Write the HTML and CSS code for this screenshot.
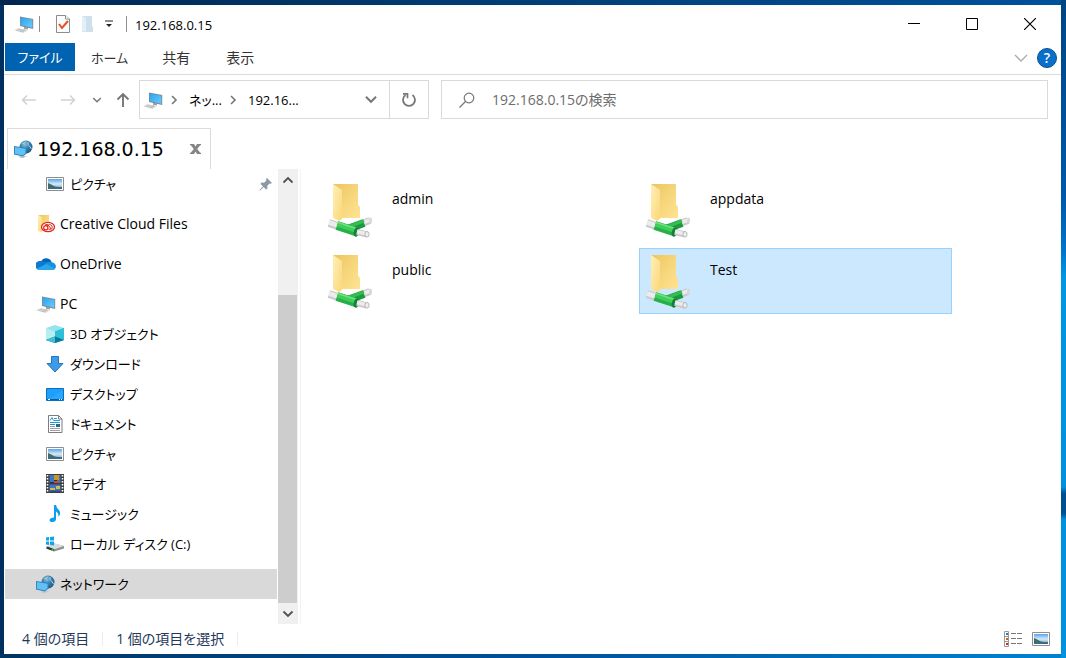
FILE: index.html
```html
<!DOCTYPE html>
<html lang="ja">
<head>
  <meta charset="UTF-8">
  <meta name="viewport" content="width=device-width, initial-scale=1.0">
  <title>192.168.0.15</title>
  <link rel="stylesheet" href="styles.css">
</head>
<body>
  <!-- Iconos compartidos -->
  <svg class="sprite" width="0" height="0" aria-hidden="true">
    <defs>
      <linearGradient id="screen" x1="0" y1="0" x2="1" y2="1">
        <stop offset="0" stop-color="#27a4f2"/><stop offset="1" stop-color="#6ccbfb"/>
      </linearGradient>
      <linearGradient id="back" x1="0" y1="0" x2="1" y2="1">
        <stop offset="0" stop-color="#ecc45f"/><stop offset="0.5" stop-color="#f6d67b"/><stop offset="1" stop-color="#ffe393"/>
      </linearGradient>
      <linearGradient id="flap" x1="0" y1="0" x2="1" y2="1">
        <stop offset="0" stop-color="#fff0b8"/><stop offset="1" stop-color="#fbd778"/>
      </linearGradient>
      <linearGradient id="sky" x1="0" y1="0" x2="0" y2="1">
        <stop offset="0" stop-color="#5ba3e8"/><stop offset="0.5" stop-color="#d3ebfa"/><stop offset="1" stop-color="#6c9db5"/>
      </linearGradient>
      <radialGradient id="globe" cx="0.4" cy="0.3" r="0.8">
        <stop offset="0" stop-color="#8fc3dc"/><stop offset="0.4" stop-color="#3b86b3"/><stop offset="1" stop-color="#174b78"/>
      </radialGradient>
    </defs>
    <symbol id="i-pc" viewBox="0 0 20 20">
      <path d="M0 16.2 4.5 14l9.5 2-4.5 3z" fill="#dedede"/>
      <path d="M2 16.2l8 1.7M4 15.2l8 1.6M6 18l5-2.8" stroke="#b5b9bc" stroke-width=".7"/>
      <path d="M10 12.5l4 1v2l-4-.8z" fill="#9aa2a9"/>
      <path d="M6 2.5 19.2 5v10L6 12z" fill="#7c8b96"/>
      <path d="M6.8 3.5 18.3 5.7v8L6.8 11z" fill="url(#screen)"/>
    </symbol>
    <symbol id="i-net" viewBox="0 0 20 20">
      <circle cx="12" cy="8" r="6.500" fill="url(#globe)"/>
      <path d="M8.500 4.500q2.500 0 3.500-2M14 3q-1 3 1.500 4l2 3" stroke="#b9dfec" stroke-width=".9" fill="none"/>
      <path d="M4 18l4-1.500 5 .7-4.500 2z" fill="#bfc9ce"/>
      <path d="M0 7 12.500 9v5.500L9 17.500 0 15.500z" fill="#2f80bc"/>
      <path d="M.9 8 11.500 9.700V14L9 16.500.9 14.700z" fill="#61c0f5"/>
    </symbol>
    <symbol id="i-picture" viewBox="0 0 20 20">
      <path d="M.5 3.5h17v13H.5z" fill="#fff" stroke="#8e8e8e"/>
      <path d="M2 5h14v10H2z" fill="url(#sky)"/>
      <path d="M2 9q3 1 5 2.5t9 1.5v1H2z" fill="#426c60"/>
      <path d="M2 13.5h14V15H2z" fill="#376b94"/>
    </symbol>
    <symbol id="i-cloudfiles" viewBox="0 0 20 20">
      <path d="M2 1h11v16H4z" fill="url(#back)"/>
      <path d="M2 1l4 2v15l-4-1z" fill="url(#flap)"/>
      <ellipse cx="12" cy="13" rx="6.5" ry="4.7" fill="#fff" stroke="#e0251b" stroke-width="1.3"/>
      <circle cx="9.8" cy="13.7" r="2.1" fill="none" stroke="#e0251b" stroke-width="1.2"/>
      <path d="M9 11q2-2 4 1l2 3M11 12.500q2.500-4 5-.3 1 4-3.500 3" fill="none" stroke="#e0251b" stroke-width="1"/>
    </symbol>
    <symbol id="i-onedrive" viewBox="0 0 20 20">
      <path d="M5.2 7.2a5.7 5.7 0 0 1 10.5 1L9 12z" fill="#0364b8"/>
      <path d="M3.4 16a4.3 4.3 0 0 1 .8-9q2.7-.5 4.5 1l6 4-6 4z" fill="#0f78d4"/>
      <path d="M8.5 10.2q2-3 6.2-2.3 4.7.5 5.2 4.1.2 3.6-3.5 4H9z" fill="#1490df"/>
      <path d="M1 14.5l9.5-4.6 8.6 4.9q-.9 1.2-2.7 1.2H3.4Q2 16 1 14.5z" fill="#28a8ea"/>
    </symbol>
    <symbol id="i-cube" viewBox="0 0 20 20">
      <path d="M0 4 9 1l9 3-9 3.5z" fill="#92e4ed"/>
      <path d="M0 4l9 3.5V19l-9-3z" fill="#5fd2de"/>
      <path d="M18 4 9 7.5V19l9-3z" fill="#17a2bc"/>
      <path d="M0 4l9 3.5v5L0 16z" fill="#b6eef2"/>
      <path d="M9 7.500 18 4v12l-9-3.500z" fill="#2fc0d6"/>
      <path d="M0 16l9-3.5 9 3.5-9 3z" fill="#087c96"/>
      <path d="M0 16l9-3.5V19z" fill="#42bfd0"/>
    </symbol>
    <symbol id="i-download" viewBox="0 0 20 20">
      <path d="M5.5 2.5h7v7H17l-8 8.5-8-8.5h4.5z" fill="#3f9bea" stroke="#2377bd"/>
    </symbol>
    <symbol id="i-desktop" viewBox="0 0 20 20">
      <path d="M.5 4.5h17v12H.5z" fill="#1ca0fb" stroke="#0871bd"/>
      <path d="M5 14 17 6v9H3z" fill="#38adff" opacity=".5"/>
      <path d="M1 15h16v1H1z" fill="#075c9d"/>
      <path d="M2 15.5h2m9 0h1m1 0h1" stroke="#fff"/>
    </symbol>
    <symbol id="i-document" viewBox="0 0 20 20">
      <path d="M2.5 1.5h10L16 5v13.500H2.500z" fill="#fff" stroke="#7d7d7d"/>
      <path d="M12.500 1.500V5H16" fill="none" stroke="#7d7d7d"/>
      <path d="M4 6.500l2-3 1.500 3M8 4.500h3M8 6.500h6M4 8.500h10M4 10.500h5" stroke="#2196d8" fill="none"/>
      <path d="M10 10h4v3h-4z" fill="#276989"/>
      <path d="M4 12.500h5M4 14.500h10M4 16.500h10" stroke="#a0a0a0"/>
    </symbol>
    <symbol id="i-video" viewBox="0 0 20 20">
      <path d="M0 0h18v19H0z" fill="#3e3e3e"/>
      <path d="M1.500 1v18M16.500 1v18" stroke="#fff" stroke-width="1.600" stroke-dasharray="1.600 1.400"/>
      <path d="M3.500 1h11v8h-11zM3.500 10.500h11v7.500h-11z" fill="#3e75c7"/>
      <path d="M8 1h5v5H8z" fill="#c59a20"/>
      <path d="M4 8h4V6h3v3H4z" fill="#26342d"/>
      <path d="M8 7h5v2H8z" fill="#d2482b"/>
      <path d="M4 14h5v2H4zM10 12h4v3h-4z" fill="#dbb94a"/>
      <path d="M4 16.500h10V18H4z" fill="#284f8f"/>
    </symbol>
    <symbol id="i-music" viewBox="0 0 20 20">
      <path d="M8 1h2q.5 3 3 5 2.500 3-.5 7 .5-4-2.500-5.500V15q0 2.500-3.500 3-3 0-3-2 .5-2.500 4.500-2.500z" fill="#0d9df0"/>
    </symbol>
    <symbol id="i-drive" viewBox="0 0 20 20">
      <path d="M0 13l8-3.500L18 12v2.500L8 17.500 0 14.500z" fill="#8c8e90"/>
      <path d="M0 12.500l8-3.500 10 3-10 3.500z" fill="#dadada"/>
      <path d="M1 13.500l7 2.700" stroke="#2f3434" stroke-width="2"/>
      <path d="M5.500 15.700l2 .8" stroke="#35dc63" stroke-width="1.500"/>
      <path d="M0 3.500 3 3v3.500H0zM4 3l4-.5v4H4zM0 7.500h3V11l-3-.5zM4 7.500h4v4L4 11z" fill="#0fa5ee"/>
    </symbol>
    <symbol id="i-share" viewBox="0 0 46 56">
      <path d="M6 1h25v20.500l2 2.500v11H13z" fill="url(#back)"/>
      <path d="M6 1l9 6v29l-3 2-6-3z" fill="url(#flap)"/>
      <!-- tubos blancos -->
      <path d="M2 40l9 3" stroke="#c9c9c9" stroke-width="8"/>
      <path d="M2 39.500l9 3" stroke="#ececec" stroke-width="5"/>
      <path d="M35 40.500l8-3" stroke="#c9c9c9" stroke-width="7"/>
      <path d="M35 40l8-3" stroke="#ececec" stroke-width="4"/>
      <ellipse cx="43.500" cy="37.500" rx="1.500" ry="3" fill="#d8d8d8"/>
      <!-- conector verde -->
      <path d="M22 45.500l15-5.500" stroke="#1b9a3d" stroke-width="8"/>
      <path d="M22 43.500l15-5.500" stroke="#35bd52" stroke-width="3"/>
      <path d="M10 42.500l20 6.500" stroke="#27b048" stroke-width="9"/>
      <path d="M10.500 41l20 6.500" stroke="#3fce5a" stroke-width="5"/>
      <path d="M11 39.500l19 6.200" stroke="#6fe081" stroke-width="1.500"/>
      <ellipse cx="29.500" cy="49" rx="2.600" ry="4.700" fill="#148039" transform="rotate(15 29.500 49)"/>
      <path d="M30 49l10 2.500" stroke="#c9c9c9" stroke-width="6"/>
      <path d="M30 48.500l10 2.500" stroke="#ececec" stroke-width="3.500"/>
      <ellipse cx="40" cy="51.300" rx="2.100" ry="2.800" fill="#eee" stroke="#aaa" stroke-width=".8"/>
    </symbol>
    <symbol id="i-down" viewBox="0 0 12 8">
      <path d="M1.500 1.500 6 6l4.500-4.500" fill="none" stroke="currentColor" stroke-width="1.800"/>
    </symbol>
    <symbol id="i-right" viewBox="0 0 8 12">
      <path d="M2 2l4 4-4 4" fill="none" stroke="currentColor" stroke-width="1.600"/>
    </symbol>
  </svg>

  <div class="window">
    <header class="titlebar">
      <svg class="icon"><use href="#i-pc"/></svg>
      <span class="divider"></span>
      <button class="quick" aria-label="プロパティ">
        <svg width="16" height="18" viewBox="0 0 16 18"><path d="M1.500.5h9l4 3.500v13.500h-13z" fill="#f9fbfd" stroke="#8c8c8c"/><path d="M10.500.5V4h4" fill="#fff" stroke="#8c8c8c"/><path d="M4 9l3 4 6-7" fill="none" stroke="#e8501e" stroke-width="2"/></svg>
      </button>
      <button class="quick" aria-label="新しいフォルダー">
        <svg width="14" height="18" viewBox="0 0 14 18"><path d="M1 1h10v10l1 1v5H1z" fill="#cde0ec"/><path d="M1 1l4 2v14l-4-1z" fill="#e3eff6"/></svg>
      </button>
      <button class="quick small" aria-label="カスタマイズ">
        <svg width="10" height="8" viewBox="0 0 10 8"><path d="M1 1h8" stroke="#222"/><path d="M2 4h6L5 7z" fill="#222"/></svg>
      </button>
      <span class="divider"></span>
      <h1>192.168.0.15</h1>
      <div class="controls">
        <button aria-label="最小化"><svg width="12" height="12" viewBox="0 0 12 12"><path d="M0 5.500h12" stroke="#000"/></svg></button>
        <button aria-label="最大化"><svg width="12" height="12" viewBox="0 0 12 12"><path d="M.5.5h11v11H.5z" fill="none" stroke="#000"/></svg></button>
        <button aria-label="閉じる"><svg width="12" height="12" viewBox="0 0 12 12"><path d="M0 0l12 12M12 0 0 12" stroke="#000" stroke-width="1.200"/></svg></button>
      </div>
    </header>

    <nav class="ribbon">
      <button class="file">ファイル</button>
      <button class="kana">ホーム</button>
      <button>共有</button>
      <button>表示</button>
      <div class="ribbon-end">
        <button class="expand" aria-label="リボンの展開"><svg width="14" height="8" viewBox="0 0 14 8"><path d="M1 1l6 6 6-6" fill="none" stroke="#aaa" stroke-width="1.300"/></svg></button>
        <button class="help" aria-label="ヘルプ">?</button>
      </div>
    </nav>

    <div class="toolbar">
      <button class="nav" aria-label="戻る"><svg width="16" height="12" viewBox="0 0 16 12"><path d="M15 6H1.500M6 1.500 1.500 6 6 10.500" fill="none" stroke="#d2d2d2" stroke-width="1.500"/></svg></button>
      <button class="nav" aria-label="進む"><svg width="16" height="12" viewBox="0 0 16 12"><path d="M1 6h13.500M10 1.500 14.500 6 10 10.500" fill="none" stroke="#d2d2d2" stroke-width="1.500"/></svg></button>
      <button class="nav recent" aria-label="最近表示した場所"><svg width="10" height="8"><use href="#i-down"/></svg></button>
      <button class="nav up" aria-label="上へ"><svg width="14" height="16" viewBox="0 0 14 16"><path d="M7 15V2M1.500 7.500 7 2l5.500 5.500" fill="none" stroke="#767676" stroke-width="1.900"/></svg></button>
      <div class="address">
        <svg class="icon"><use href="#i-pc"/></svg>
        <svg class="sep" width="8" height="12"><use href="#i-right"/></svg>
        <a href="#">ネッ...</a>
        <svg class="sep" width="8" height="12"><use href="#i-right"/></svg>
        <a href="#">192.16...</a>
        <button class="history" aria-label="履歴"><svg width="14" height="9"><use href="#i-down"/></svg></button>
        <button class="refresh" aria-label="更新"><svg width="16" height="16" viewBox="0 0 16 16"><path d="M4.500 3A6 6 0 1 0 11.500 3" fill="none" stroke="#777" stroke-width="1.800"/><path d="M2 1.800h4.500v4.500" fill="none" stroke="#777" stroke-width="1.700"/></svg></button>
      </div>
      <label class="search">
        <svg width="18" height="18" viewBox="0 0 18 18"><circle cx="11" cy="7" r="4.800" fill="none" stroke="#777" stroke-width="1.200"/><path d="M7.500 10.500 1.500 16.500" stroke="#777" stroke-width="1.300"/></svg>
        <input type="search" aria-label="検索" placeholder="192.168.0.15の検索">
      </label>
    </div>

    <div class="tabs">
      <div class="tab">
        <svg class="icon"><use href="#i-net"/></svg>
        <a href="#">192.168.0.15</a>
        <button aria-label="タブを閉じる"><svg width="11" height="10" viewBox="0 0 11 10"><path d="M0 0h4l1.500 2.500L7 0h4v1.200h-.8L7.200 5l3 3.800h.8V10H7L5.500 7.500 4 10H0V8.800h.8l3-3.800-3-3.800H0z" fill="#858585"/></svg></button>
      </div>
    </div>

    <div class="main">
      <nav class="tree">
        <a class="child kana" href="#"><svg class="icon"><use href="#i-picture"/></svg>ピクチャ
          <svg class="pin" width="14" height="14" viewBox="0 0 14 14"><path d="M8 1l5 5-1.500.8-1-.2-2.300 2.300.3 2.600L7 12.500 4.700 10 1 13.500H.5V13L4 9.300 1.500 7l1-1.500 2.600.3L7.400 3.500 7 2z" fill="#8c98a3"/></svg>
        </a>
        <a class="group" href="#"><svg class="icon"><use href="#i-cloudfiles"/></svg>Creative Cloud Files</a>
        <a class="group" href="#"><svg class="icon"><use href="#i-onedrive"/></svg>OneDrive</a>
        <a class="group" href="#"><svg class="icon"><use href="#i-pc"/></svg>PC</a>
        <a class="child kana" href="#"><svg class="icon"><use href="#i-cube"/></svg>3D オブジェクト</a>
        <a class="child kana" href="#"><svg class="icon"><use href="#i-download"/></svg>ダウンロード</a>
        <a class="child kana" href="#"><svg class="icon"><use href="#i-desktop"/></svg>デスクトップ</a>
        <a class="child kana" href="#"><svg class="icon"><use href="#i-document"/></svg>ドキュメント</a>
        <a class="child kana" href="#"><svg class="icon"><use href="#i-picture"/></svg>ピクチャ</a>
        <a class="child kana" href="#"><svg class="icon"><use href="#i-video"/></svg>ビデオ</a>
        <a class="child kana" href="#"><svg class="icon"><use href="#i-music"/></svg>ミュージック</a>
        <a class="child kana" href="#"><svg class="icon"><use href="#i-drive"/></svg>ローカル ディスク (C:)</a>
        <a class="group kana current" href="#"><svg class="icon"><use href="#i-net"/></svg>ネットワーク</a>
      </nav>
      <div class="scrollbar">
        <button aria-label="上へスクロール"><svg class="flip" width="12" height="8"><use href="#i-down"/></svg></button>
        <div class="track"><div class="thumb"></div></div>
        <button aria-label="下へスクロール"><svg width="12" height="8"><use href="#i-down"/></svg></button>
      </div>
      <main class="files">
        <a class="item" href="#"><svg><use href="#i-share"/></svg><span>admin</span></a>
        <a class="item" href="#"><svg><use href="#i-share"/></svg><span>appdata</span></a>
        <a class="item" href="#"><svg><use href="#i-share"/></svg><span>public</span></a>
        <a class="item selected" href="#"><svg><use href="#i-share"/></svg><span>Test</span></a>
      </main>
    </div>

    <footer class="status">
      <span>4 個の項目</span>
      <span>1 個の項目を選択</span>
      <div class="views">
        <button aria-label="詳細">
          <svg width="18" height="16" viewBox="0 0 18 16"><path d="M.5.5h4v15h-4zM.5 5.500h4M.5 10.500h4" fill="#fff" stroke="#999"/><path d="M2 2h2v2H2z" fill="#3f6fb5"/><path d="M2 7h2v2H2z" fill="#b7672b"/><path d="M2 12h2v2H2z" fill="#d22"/><path d="M7 2.500h5m1 0h5M7 7.500h5m1 0h5M7 12.500h5m1 0h5" stroke="#777"/></svg>
        </button>
        <button aria-label="大アイコン"><svg class="icon"><use href="#i-picture"/></svg></button>
      </div>
    </footer>
  </div>
</body>
</html>
```
FILE: styles.css
```css
* {
  box-sizing: border-box;
}
body {
  margin: 0;
  padding: 5px 5px 4px 4px;
  min-height: 100vh;
  display: flex;
  font-family: "Open Sans", "Noto Sans CJK JP", sans-serif;
  font-size: 14px;
  line-height: 20px;
  font-feature-settings: "palt";
  color: #000;
  background:
    linear-gradient(#004584, #0058a8 30%, #0074c8 38%, #0096e0 42%, #0091dc 74%, #004f8f 75%, #004f8f 78%, #0092dd 79%) right / 5px 100% no-repeat,
    linear-gradient(90deg, #002650, #003a70 40%, #00529c) top / 100% 5px no-repeat,
    linear-gradient(90deg, #003563, #00509a 50%, #0083d2) bottom / 100% 4px no-repeat,
    #003060;
}
button {
  display: flex;
  align-items: center;
  justify-content: center;
  padding: 0;
  border: none;
  background: none;
  font: inherit;
  font-feature-settings: inherit;
  color: inherit;
}
a {
  color: inherit;
  text-decoration: none;
}
svg {
  display: block;
  flex: none;
}
.sprite {
  position: absolute;
}
.icon {
  width: 20px;
  height: 20px;
  overflow: visible;
}
.window {
  flex: 1;
  min-width: 0;
  display: flex;
  flex-direction: column;
  background: #fff;
}

/* barra de título */
.titlebar {
  display: flex;
  align-items: center;
  height: 38px;
  padding: 0 2px 0 10px;
}
.divider {
  width: 1px;
  height: 16px;
  margin: 0 8px 0 5px;
  background: #8f8f8f;
}
.quick {
  width: 20px;
  height: 24px;
  margin-left: 5px;
}
.small {
  margin: 0 2px 0 1px;
}
.titlebar h1 {
  margin: 0;
  padding-top: 2px;
  font-size: 13px;
  font-weight: 400;
}
.controls {
  display: flex;
  height: 100%;
  margin-left: auto;
}
.controls button {
  width: 58px;
}

/* cinta */
.ribbon {
  display: flex;
  height: 32px;
  padding-left: 1px;
  border-bottom: 1px solid #dadbdc;
  color: #333;
}
.ribbon > button {
  height: 28px;
  padding: 2px 18px 0;
}
.ribbon > .kana {
  padding: 2px 16px 0;
}
.ribbon > .file {
  width: 70px;
  padding: 0;
  background: #0063b1;
  color: #fff;
  font-size: 13px;
}
.ribbon-end {
  display: flex;
  align-items: center;
  gap: 9px;
  height: 30px;
  margin-left: auto;
  padding-right: 4px;
}
.help {
  width: 20px;
  height: 20px;
  border: 1px solid #0b4f8c;
  border-radius: 50%;
  background: #0a6fcb;
  color: #fff;
  font-weight: 600;
}

/* direcciones y búsqueda */
.toolbar {
  display: flex;
  padding: 5px 13px 9px 5px;
}
.nav {
  width: 39px;
}
.recent {
  width: 20px;
  color: #777;
}
.up {
  width: 32px;
}
.address {
  flex: 0 1 290px;
  display: flex;
  align-items: center;
  height: 39px;
  padding-left: 3px;
  border: 1px solid #d9d9d9;
  font-size: 13px;
}
.sep {
  margin: 0 11px 0 7px;
  color: #777;
}
.address .sep + a {
  white-space: nowrap;
}
.history {
  width: 36px;
  height: 100%;
  margin-left: auto;
  color: #777;
}
.refresh {
  width: 39px;
  height: 100%;
  border-left: 1px solid #d9d9d9;
}
.search {
  flex: 1;
  display: flex;
  align-items: center;
  gap: 16px;
  margin-left: 12px;
  padding-left: 16px;
  border: 1px solid #d9d9d9;
}
.search input {
  flex: 1;
  min-width: 0;
  padding: 0;
  border: none;
  outline: none;
  font: inherit;
  font-feature-settings: inherit;
}
.search input::placeholder {
  color: #6d6d6d;
}

/* pestañas */
.tabs {
  display: flex;
  padding-left: 3px;
}
.tab {
  display: flex;
  align-items: center;
  height: 41px;
  padding: 0 9px 0 6px;
  border: 1px solid #dcdcdc;
  border-bottom: none;
  font-family: "DejaVu Sans", sans-serif;
  font-size: 19px;
}
.tab a {
  margin: 0 26px 0 3px;
}

/* árbol */
.main {
  flex: 1;
  display: flex;
}
.tree {
  width: 273px;
  padding: 0 0 25px 1px;
}
.tree a {
  display: flex;
  align-items: center;
  gap: 4px;
  height: 30px;
}
.tree .group {
  padding-left: 31px;
}
.tree .child {
  padding-left: 41px;
}
.tree .child + .group,
.tree .group + .group {
  margin-top: 10px;
}
.tree .current {
  background: #d9d9d9;
}
.kana {
  font-size: 13px;
}
.pin {
  margin: 0 4px 0 auto;
}
.scrollbar {
  display: flex;
  flex-direction: column;
  width: 20px;
  margin: 0 2px 0 1px;
  background: #f0f0f0;
  color: #505050;
}
.scrollbar button {
  height: 21px;
}
.flip {
  transform: rotate(180deg);
}
.track {
  flex: 1;
  display: flex;
  align-items: flex-end;
}
.thumb {
  width: 19px;
  height: 74.6%;
  background: #cdcdcd;
}

/* carpetas */
.files {
  flex: 1;
  display: grid;
  grid-template-columns: repeat(auto-fill, 313px);
  align-content: start;
  gap: 5px;
  padding: 8px 20px;
  border-left: 1px solid #f3f3f3;
}
.item {
  display: flex;
  gap: 19px;
  height: 66px;
  padding: 5px;
  border: 1px solid transparent;
}
.item svg {
  width: 46px;
  height: 56px;
}
.item span {
  padding-top: 6px;
}
.selected {
  border-color: #99d1ff;
  background: #cce8ff;
}

/* barra de estado */
.status {
  display: flex;
  align-items: center;
  height: 30px;
  padding: 0 9px 0 18px;
  color: #1e395b;
}
.status span {
  margin-right: 13px;
  padding-right: 13px;
  line-height: 14px;
  border-right: 1px solid #ededed;
}
.views {
  display: flex;
  gap: 10px;
  margin-left: auto;
}
```
